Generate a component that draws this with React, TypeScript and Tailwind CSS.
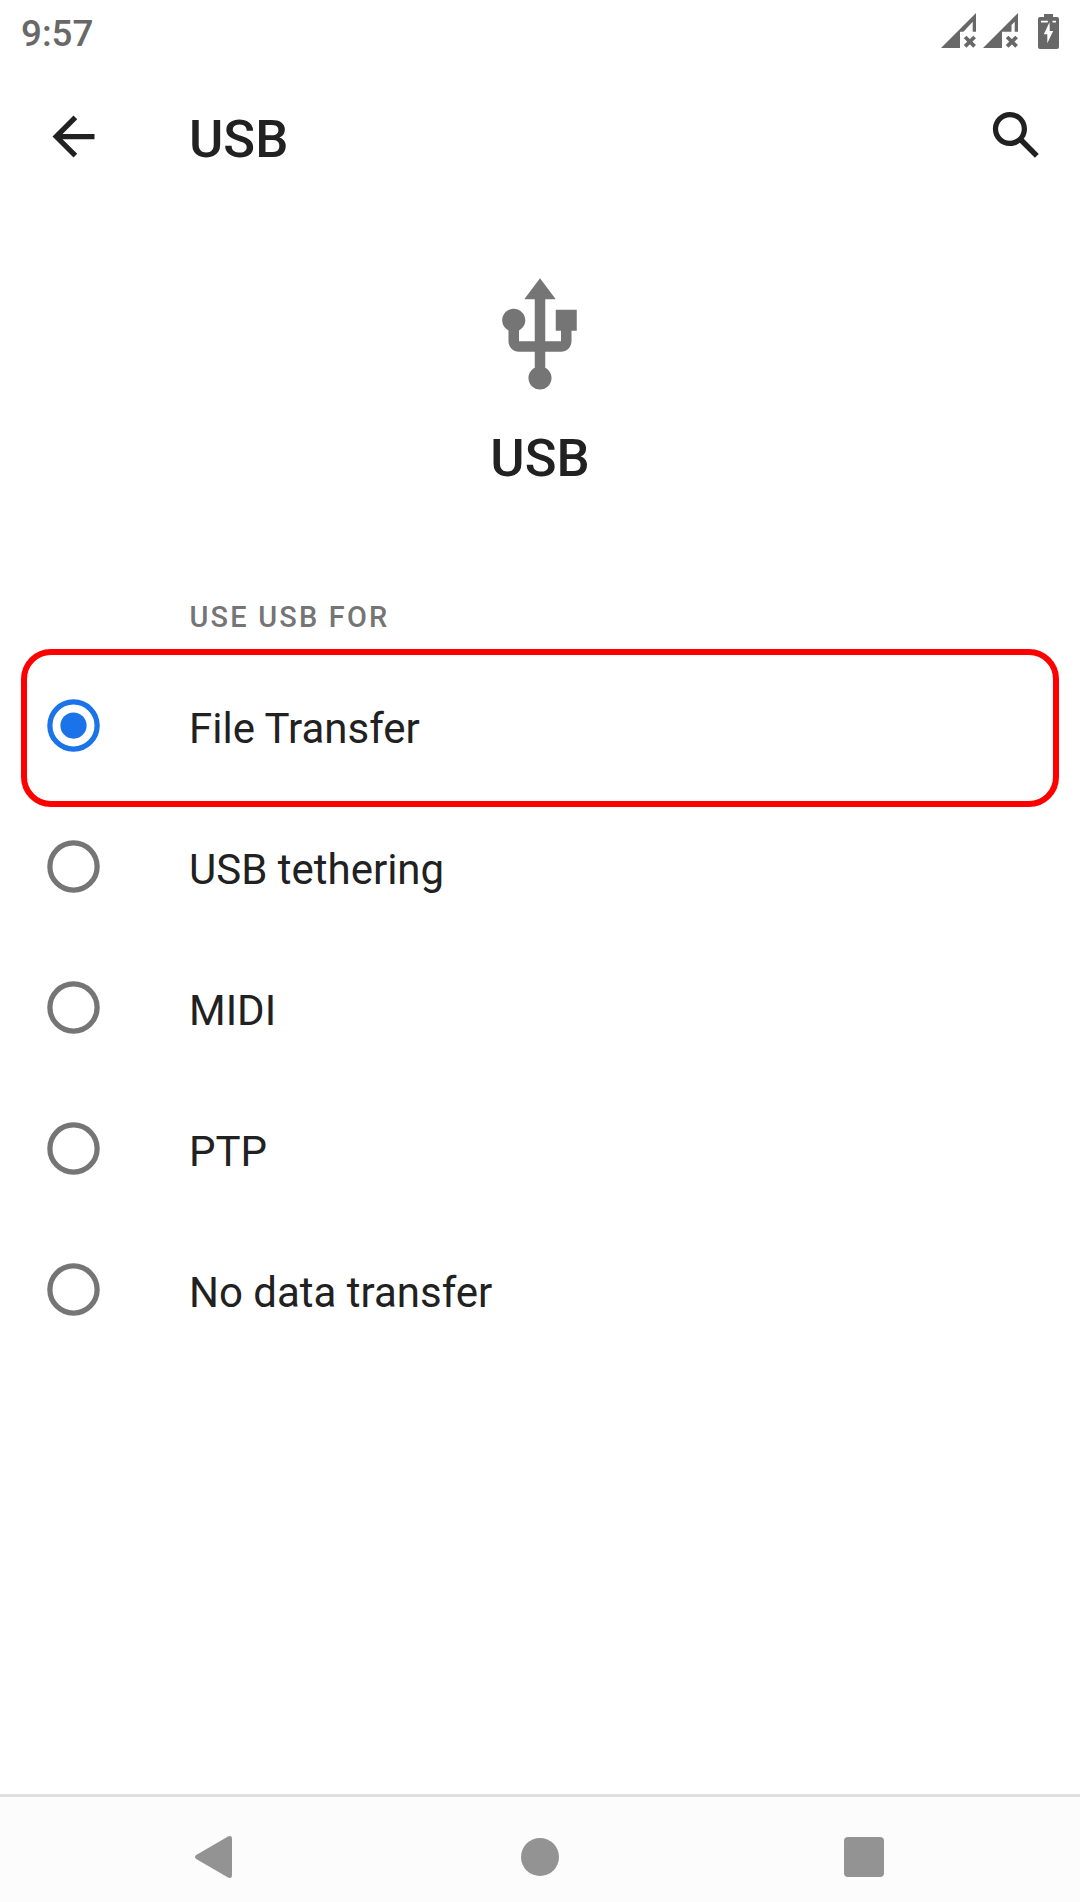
import React from 'react';

const options = ['File Transfer', 'USB tethering', 'MIDI', 'PTP', 'No data transfer'];

function Signal({ shape }: { shape: string }) {
  return (
    <svg className="h-[35px] w-[35px]" viewBox="0 0 35 35" fill="#686868">
      <path d={shape} />
      <path d="M24.100 24L33.600 33.300M33.600 24L24.100 33.300" stroke="#686868" strokeWidth="3.800" />
    </svg>
  );
}

function StatusBar() {
  return (
    <div className="flex h-[63px] items-start justify-between px-[21px]">
      <span className="mt-[12px] text-[36.75px] leading-[43px] font-medium text-[#686868]">9:57</span>
      <div className="mt-[13px] flex">
        <Signal shape="M35 0V18.700H31.700V8.700L22.400 18.700H19V35H0Z" />
        <div className="ml-[7px]">
          <Signal shape="M35 0V18.700H31.700V8.700L28.500 12V18.700H19V35H0Z" />
        </div>
        <svg className="ml-[20px] h-9 w-[21px]" viewBox="0 0 21 36" fill="#686868">
          <path
            fillRule="evenodd"
            d="M6 1H15V4H19Q21 4 21 6V34Q21 36 19 36H2Q0 36 0 34V6Q0 4 2 4H6ZM11.500 9.300L5.800 21.300H9.300V30.300L15.200 18H11.800ZM3 7.800V9.600H9.500L10.300 7.800ZM14.500 7.800V9.600H18V7.800Z"
          />
        </svg>
      </div>
    </div>
  );
}

function AppBar() {
  return (
    <header className="flex h-[147px] items-start pr-[32px] pl-[42px]">
      <svg className="mt-[42px] size-[63px]" viewBox="0 0 24 24" fill="#212121">
        <path d="M20 11H7.830l5.590-5.590L12 4l-8 8 8 8 1.410-1.410L7.830 13H20v-2z" />
      </svg>
      <h1 className="mt-[45px] ml-[84px] flex-1 text-[52.5px] leading-[62px] font-medium text-[#212121]">USB</h1>
      <svg className="mt-[41px] size-[63px]" viewBox="0 0 24 24" fill="#212121">
        <path d="M20.490 19l-5.730-5.730C15.530 12.200 16 10.910 16 9.500 16 5.910 13.090 3 9.500 3S3 5.910 3 9.500 5.910 16 9.500 16c1.410 0 2.700-.470 3.770-1.240L19 20.490 20.490 19zM5 9.500C5 7.010 7.010 5 9.500 5S14 7.010 14 9.500 11.990 14 9.500 14 5 11.990 5 9.500z" />
      </svg>
    </header>
  );
}

function Hero() {
  return (
    <section className="flex h-[376px] flex-col items-center pt-[63px]">
      <svg className="size-[126px]" viewBox="0 0 24 24" fill="#757575">
        <path d="M15 7v4h1v2h-3V5h2l-3-4-3 4h2v8H8v-2.070c.7-.37 1.200-1.080 1.200-1.930 0-1.210-.99-2.200-2.200-2.200-1.210 0-2.200.99-2.200 2.200 0 .85.5 1.560 1.200 1.930V13c0 1.110.89 2 2 2h3v3.050c-.71.37-1.200 1.100-1.200 1.950 0 1.220.99 2.200 2.200 2.200 1.210 0 2.200-.98 2.200-2.200 0-.85-.49-1.580-1.200-1.950V15h3c1.110 0 2-.89 2-2v-2h1V7h-4z" />
      </svg>
      <h2 className="mt-[28px] text-[52.5px] leading-[62px] font-medium text-[#212121]">USB</h2>
    </section>
  );
}

function Radio({ checked }: { checked: boolean }) {
  const color = checked ? '#1a73e8' : '#757575';
  return (
    <svg className="size-[63px]" viewBox="0 0 24 24">
      <circle cx="12" cy="12" r="9" fill="none" stroke={color} strokeWidth="2" />
      {checked && <circle cx="12" cy="12" r="5" fill={color} />}
    </svg>
  );
}

export default function App() {
  return (
    <div className="flex h-[1902px] w-[1080px] flex-col overflow-hidden bg-white font-['Roboto',sans-serif]">
      <StatusBar />
      <AppBar />
      <Hero />
      <main className="relative flex-1">
        <h3 className="h-[70px] pt-[14px] pl-[189.5px] text-[28.875px] leading-[34px] font-medium tracking-[0.077em] text-[#757575]">
          USE USB FOR
        </h3>
        {options.map((label, i) => (
          <label key={label} className="flex h-[141px] items-start pt-[38px] pl-[41.5px]">
            <Radio checked={i === 0} />
            <span className="mt-[10px] ml-[84.5px] text-[42px] leading-[50px] text-[#212121]">{label}</span>
          </label>
        ))}
        <div className="absolute top-[63px] left-[21px] h-[158px] w-[1038px] rounded-[30px] border-[6px] border-[#ff0000]" />
      </main>
      <nav className="flex h-[108px] items-center justify-between border-t-[3px] border-[#e0e0e0] bg-[#fcfcfc] pt-[39px] pr-[196px] pb-[24px] pl-[195px]">
        <svg className="h-[42px] w-[37px]" viewBox="0 0 37 42" fill="#939393">
          <path d="M33 .5Q37-1.200 37 3V39Q37 43.200 33 41.500L1.200 23Q-1.200 21 1.200 19Z" />
        </svg>
        <span className="ml-[4px] size-[38px] rounded-full bg-[#939393]" />
        <span className="size-[40px] rounded-[4px] bg-[#939393]" />
      </nav>
    </div>
  );
}
